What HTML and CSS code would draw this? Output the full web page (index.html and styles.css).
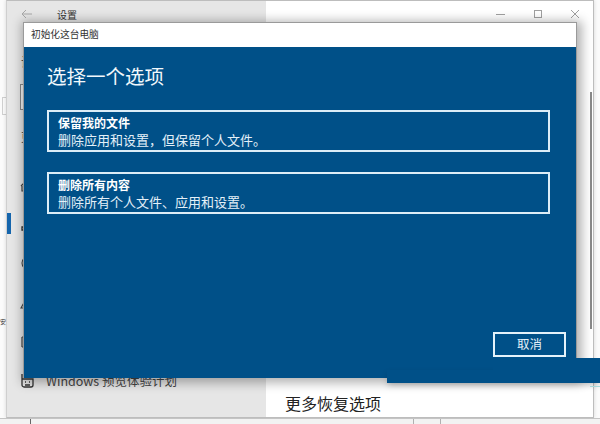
FILE: index.html
```html
<!DOCTYPE html>
<html lang="zh-CN">
<head>
<meta charset="utf-8">
<title>初始化这台电脑</title>
<link rel="stylesheet" href="styles.css">
</head>
<body>
<div class="edge-bits">
  <span class="edge-box"></span>
  <span class="edge-char">安</span>
</div>
<div class="settings">
  <aside class="sidebar">
    <div class="sidebar-head">
      <svg class="back" width="12" height="10" viewBox="0 0 12 10"><path d="M11 5H1M5 1 1 5l4 4" fill="none" stroke="#a8a8a8" stroke-width="1"/></svg>
      <span class="app-title">设置</span>
    </div>
    <div class="side-label">设</div>
    <div class="searchbox"></div>
    <div class="side-label side-label-2">更</div>
    <nav class="nav">
      <div class="nav-row"><svg class="nav-icon" width="16" height="16" viewBox="0 0 16 16"><path d="M1 9 6 4l4 4v6H2V9" fill="none" stroke="#444" stroke-width="1.2"/></svg></div>
      <div class="nav-row"><span class="accent"></span><svg class="nav-icon" width="16" height="16" viewBox="0 0 16 16"><circle cx="8" cy="5" r="3" fill="none" stroke="#333" stroke-width="1.3"/><path d="M2 14V11h8v3z" fill="none" stroke="#333" stroke-width="1.3"/></svg></div>
      <div class="nav-row"><svg class="nav-icon" width="16" height="16" viewBox="0 0 16 16"><circle cx="8" cy="8" r="6" fill="none" stroke="#444" stroke-width="1.1"/></svg></div>
      <div class="nav-row"><svg class="nav-icon" width="16" height="16" viewBox="0 0 16 16"><path d="M1 14 7 3h4v11z" fill="none" stroke="#444" stroke-width="1.1"/></svg></div>
      <div class="nav-row"><svg class="nav-icon" width="16" height="16" viewBox="0 0 16 16"><path d="M2 3v10M2 3h8v10H2" fill="none" stroke="#444" stroke-width="1.2"/></svg></div>
      <div class="nav-row"><svg class="nav-icon" width="16" height="16" viewBox="0 0 16 16"><path d="M2 1v5M2 6h11v6a2 2 0 0 1-2 2H4a2 2 0 0 1-2-2zM5 9h1M9 9h1M5 12h5" fill="none" stroke="#333" stroke-width="1.3"/></svg><span class="nav-text">Windows 预览体验计划</span></div>
    </nav>
  </aside>
  <main class="content">
    <div class="caption">
      <svg width="10" height="10" viewBox="0 0 10 10"><path d="M0 5.5h9" stroke="#a0a0a0" stroke-width="1"/></svg>
      <svg width="10" height="10" viewBox="0 0 10 10"><rect x="1.5" y="1.5" width="7" height="7" fill="none" stroke="#a0a0a0" stroke-width="1"/></svg>
      <svg width="10" height="10" viewBox="0 0 10 10"><path d="M1 1l8 8M9 1 1 9" stroke="#a0a0a0" stroke-width="1"/></svg>
    </div>
    <div class="scrollbar"></div>
    <h2 class="more">更多恢复选项</h2>
  </main>
</div>
<div class="dialog">
  <header class="dialog-title">初始化这台电脑</header>
  <section class="dialog-body">
    <h1 class="dialog-heading">选择一个选项</h1>
    <div class="option">
      <strong class="option-name">保留我的文件</strong>
      <span class="option-desc">删除应用和设置，但保留个人文件。</span>
    </div>
    <div class="option">
      <strong class="option-name">删除所有内容</strong>
      <span class="option-desc">删除所有个人文件、应用和设置。</span>
    </div>
    <div class="dialog-actions"><button class="cancel">取消</button></div>
  </section>
</div>
<div class="band band-low"></div>
<div class="band band-high"></div>
<div class="teal-line"></div>
<div class="taskstrip"><i class="tick tick-a"></i><i class="tick tick-b"></i><i class="tick tick-c"></i></div>
</body>
</html>
```

FILE: styles.css
```css
* { box-sizing: border-box; }
html, body {
  margin: 0;
  width: 600px;
  height: 424px;
  overflow: hidden;
  background: #fbfbfb;
  font-family: "Noto Sans CJK SC", "Liberation Sans", sans-serif;
}
.edge-bits { width: 6px; height: 424px; position: relative; }
.edge-box {
  position: absolute; left: 2px; top: 97px; width: 6px; height: 18px;
  border: 1px solid #d0d0d0;
}
.edge-char {
  position: absolute; left: 0; top: 318px; font-size: 6px; line-height: 8px; color: #333;
}
.settings {
  position: absolute; left: 6px; top: 0; width: 588px; height: 418px;
  display: flex;
  border: 1px solid #bdbdbd;
  border-left-color: #cfcfcf;
  box-shadow: 0 0 4px rgba(0,0,0,.15);
  background: #fff;
}
.sidebar {
  width: 259px;
  flex: none;
  background: #e6e6e6;
  display: flex;
  flex-direction: column;
}
.sidebar-head {
  height: 26px;
  display: flex;
  align-items: center;
  padding-left: 14px;
}
.app-title { margin-left: 24px; font-size: 10px; color: #333; }
.side-label { margin: 28px 0 0 14px; font-size: 12px; line-height: 14px; color: #333; }
.side-label-2 { margin-top: 20px; }
.searchbox {
  margin: 15px 0 0 13px;
  width: 40px; height: 26px;
  border: 1px solid #8a8a8a;
  background: #f2f2f2;
}
.nav { margin-top: 21px; display: flex; flex-direction: column; }
.nav-row { height: 39.25px; display: flex; align-items: center; padding-left: 13px; position: relative; }
.nav-icon { flex: none; }
.accent {
  position: absolute; left: 0; top: 9px;
  width: 4px; height: 21px; background: #1565ac;
}
.nav-text { margin-left: 10px; font-size: 12.5px; color: #444; white-space: nowrap; }
.content { flex: 1; position: relative; }
.caption {
  height: 26px;
  display: flex;
  align-items: center;
  justify-content: flex-end;
  gap: 27px;
  padding-right: 13px;
}
.scrollbar {
  position: absolute; right: 1px; top: 91px; width: 2px; height: 237px; background: #8a8a8a;
}
.more {
  position: absolute; left: 19px; top: 391px;
  margin: 0; font-size: 16px; line-height: 22px; font-weight: 400; color: #222;
}
.band { position: absolute; background: #005088; }
.band-low { left: 387px; right: 0; top: 370px; height: 13px; box-shadow: 0 3px 6px -1px rgba(0,0,0,.25); }
.band-high { left: 493px; right: 0; top: 358px; height: 25px; }
.dialog {
  position: absolute; left: 23px; top: 22px; width: 554px; height: 356px;
  display: flex; flex-direction: column;
  border: 1px solid #9a9a9a;
  border-bottom: 0;
  box-shadow: 2px 2px 10px 3px rgba(0,0,0,.3);
  background: #005088;
}
.dialog-title {
  height: 24px; flex: none;
  background: #fff;
  padding-left: 7px;
  font-size: 9.7px; line-height: 23px; color: #333;
}
.dialog-body {
  flex: 1;
  padding: 0 26px 21px 23px;
  display: flex; flex-direction: column;
  color: #fff;
}
.dialog-heading {
  margin: 15px 0 20px;
  font-size: 19.5px; line-height: 28px; font-weight: 400; color: #f2f8fc;
}
.option {
  height: 42px;
  margin-bottom: 20px;
  border: 2px solid #dcedf7;
  padding: 3px 9px;
  display: flex; flex-direction: column;
}
.option-name { font-size: 12px; line-height: 16px; font-weight: 700; }
.option-desc { font-size: 13px; line-height: 17px; color: #e4f0f8; }
.dialog-actions { margin-top: auto; display: flex; justify-content: flex-end; margin-right: -16px; }
.cancel {
  width: 73px; height: 25px;
  border: 2px solid #e4f2fa;
  background: transparent;
  color: #e4f0f8;
  font: 12.5px/1 "Noto Sans CJK SC", sans-serif;
  padding: 0;
}
.teal-line { position: absolute; left: 590px; right: 0; top: 386px; height: 1px; background: #a6d8da; }
.taskstrip {
  position: absolute; left: 0; right: 0; top: 418px; height: 6px;
  background: #f2f2f2; border-top: 1px solid #c4c4c4;
}
.tick { position: absolute; top: 0; width: 1px; height: 6px; background: #b0b0b0; }
.tick-a { left: 30px; background: #666; }
.tick-b { left: 413px; }
.tick-c { left: 440px; }
```
